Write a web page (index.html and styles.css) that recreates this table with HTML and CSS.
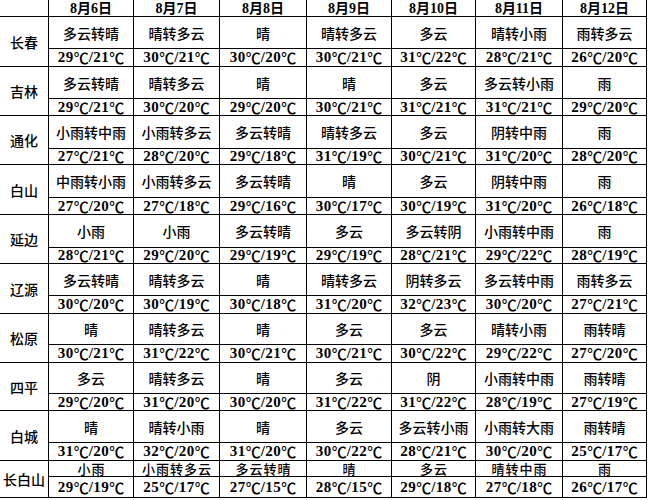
FILE: index.html
```html
<!DOCTYPE html>
<html lang="zh-CN">
<head>
<meta charset="utf-8">
<title>吉林省天气预报</title>
<link rel="stylesheet" href="styles.css">
</head>
<body>
<div class="wx">
  <div class="c hd"></div>
  <div class="c hd">8月6日</div>
  <div class="c hd">8月7日</div>
  <div class="c hd">8月8日</div>
  <div class="c hd">8月9日</div>
  <div class="c hd">8月10日</div>
  <div class="c hd">8月11日</div>
  <div class="c hd">8月12日</div>

  <div class="c city">长春</div>
  <div class="c w">多云转晴</div><div class="c w">晴转多云</div><div class="c w">晴</div><div class="c w">晴转多云</div><div class="c w">多云</div><div class="c w">晴转小雨</div><div class="c w">雨转多云</div>
  <div class="c t">29<span class="u">℃</span>/21<span class="u">℃</span></div><div class="c t">30<span class="u">℃</span>/21<span class="u">℃</span></div><div class="c t">30<span class="u">℃</span>/20<span class="u">℃</span></div><div class="c t">30<span class="u">℃</span>/21<span class="u">℃</span></div><div class="c t">31<span class="u">℃</span>/22<span class="u">℃</span></div><div class="c t">28<span class="u">℃</span>/21<span class="u">℃</span></div><div class="c t">26<span class="u">℃</span>/20<span class="u">℃</span></div>

  <div class="c city">吉林</div>
  <div class="c w">多云转晴</div><div class="c w">晴转多云</div><div class="c w">晴</div><div class="c w">晴</div><div class="c w">多云</div><div class="c w">多云转小雨</div><div class="c w">雨</div>
  <div class="c t">29<span class="u">℃</span>/21<span class="u">℃</span></div><div class="c t">30<span class="u">℃</span>/20<span class="u">℃</span></div><div class="c t">29<span class="u">℃</span>/20<span class="u">℃</span></div><div class="c t">30<span class="u">℃</span>/21<span class="u">℃</span></div><div class="c t">31<span class="u">℃</span>/21<span class="u">℃</span></div><div class="c t">31<span class="u">℃</span>/21<span class="u">℃</span></div><div class="c t">29<span class="u">℃</span>/20<span class="u">℃</span></div>

  <div class="c city">通化</div>
  <div class="c w">小雨转中雨</div><div class="c w">小雨转多云</div><div class="c w">多云转晴</div><div class="c w">晴转多云</div><div class="c w">多云</div><div class="c w">阴转中雨</div><div class="c w">雨</div>
  <div class="c t">27<span class="u">℃</span>/21<span class="u">℃</span></div><div class="c t">28<span class="u">℃</span>/20<span class="u">℃</span></div><div class="c t">29<span class="u">℃</span>/18<span class="u">℃</span></div><div class="c t">31<span class="u">℃</span>/19<span class="u">℃</span></div><div class="c t">30<span class="u">℃</span>/21<span class="u">℃</span></div><div class="c t">31<span class="u">℃</span>/20<span class="u">℃</span></div><div class="c t">28<span class="u">℃</span>/20<span class="u">℃</span></div>

  <div class="c city">白山</div>
  <div class="c w">中雨转小雨</div><div class="c w">小雨转多云</div><div class="c w">多云转晴</div><div class="c w">晴</div><div class="c w">多云</div><div class="c w">阴转中雨</div><div class="c w">雨</div>
  <div class="c t">27<span class="u">℃</span>/20<span class="u">℃</span></div><div class="c t">27<span class="u">℃</span>/18<span class="u">℃</span></div><div class="c t">29<span class="u">℃</span>/16<span class="u">℃</span></div><div class="c t">30<span class="u">℃</span>/17<span class="u">℃</span></div><div class="c t">30<span class="u">℃</span>/19<span class="u">℃</span></div><div class="c t">31<span class="u">℃</span>/20<span class="u">℃</span></div><div class="c t">26<span class="u">℃</span>/18<span class="u">℃</span></div>

  <div class="c city">延边</div>
  <div class="c w">小雨</div><div class="c w">小雨</div><div class="c w">多云转晴</div><div class="c w">多云</div><div class="c w">多云转阴</div><div class="c w">小雨转中雨</div><div class="c w">雨</div>
  <div class="c t">28<span class="u">℃</span>/21<span class="u">℃</span></div><div class="c t">29<span class="u">℃</span>/20<span class="u">℃</span></div><div class="c t">29<span class="u">℃</span>/19<span class="u">℃</span></div><div class="c t">29<span class="u">℃</span>/19<span class="u">℃</span></div><div class="c t">28<span class="u">℃</span>/21<span class="u">℃</span></div><div class="c t">29<span class="u">℃</span>/22<span class="u">℃</span></div><div class="c t">28<span class="u">℃</span>/19<span class="u">℃</span></div>

  <div class="c city">辽源</div>
  <div class="c w">多云转晴</div><div class="c w">晴转多云</div><div class="c w">晴</div><div class="c w">晴转多云</div><div class="c w">阴转多云</div><div class="c w">多云转中雨</div><div class="c w">雨转多云</div>
  <div class="c t">30<span class="u">℃</span>/20<span class="u">℃</span></div><div class="c t">30<span class="u">℃</span>/19<span class="u">℃</span></div><div class="c t">30<span class="u">℃</span>/18<span class="u">℃</span></div><div class="c t">31<span class="u">℃</span>/20<span class="u">℃</span></div><div class="c t">32<span class="u">℃</span>/23<span class="u">℃</span></div><div class="c t">30<span class="u">℃</span>/20<span class="u">℃</span></div><div class="c t">27<span class="u">℃</span>/21<span class="u">℃</span></div>

  <div class="c city">松原</div>
  <div class="c w">晴</div><div class="c w">晴转多云</div><div class="c w">晴</div><div class="c w">多云</div><div class="c w">多云</div><div class="c w">晴转小雨</div><div class="c w">雨转晴</div>
  <div class="c t">30<span class="u">℃</span>/21<span class="u">℃</span></div><div class="c t">31<span class="u">℃</span>/22<span class="u">℃</span></div><div class="c t">30<span class="u">℃</span>/21<span class="u">℃</span></div><div class="c t">30<span class="u">℃</span>/21<span class="u">℃</span></div><div class="c t">30<span class="u">℃</span>/22<span class="u">℃</span></div><div class="c t">29<span class="u">℃</span>/22<span class="u">℃</span></div><div class="c t">27<span class="u">℃</span>/20<span class="u">℃</span></div>

  <div class="c city">四平</div>
  <div class="c w">多云</div><div class="c w">晴转多云</div><div class="c w">晴</div><div class="c w">多云</div><div class="c w">阴</div><div class="c w">小雨转中雨</div><div class="c w">雨转晴</div>
  <div class="c t">29<span class="u">℃</span>/20<span class="u">℃</span></div><div class="c t">31<span class="u">℃</span>/20<span class="u">℃</span></div><div class="c t">30<span class="u">℃</span>/20<span class="u">℃</span></div><div class="c t">31<span class="u">℃</span>/22<span class="u">℃</span></div><div class="c t">31<span class="u">℃</span>/22<span class="u">℃</span></div><div class="c t">28<span class="u">℃</span>/19<span class="u">℃</span></div><div class="c t">27<span class="u">℃</span>/19<span class="u">℃</span></div>

  <div class="c city">白城</div>
  <div class="c w">晴</div><div class="c w">晴转小雨</div><div class="c w">晴</div><div class="c w">多云</div><div class="c w">多云转小雨</div><div class="c w">小雨转大雨</div><div class="c w">雨转晴</div>
  <div class="c t">31<span class="u">℃</span>/20<span class="u">℃</span></div><div class="c t">32<span class="u">℃</span>/20<span class="u">℃</span></div><div class="c t">31<span class="u">℃</span>/20<span class="u">℃</span></div><div class="c t">30<span class="u">℃</span>/22<span class="u">℃</span></div><div class="c t">28<span class="u">℃</span>/21<span class="u">℃</span></div><div class="c t">30<span class="u">℃</span>/20<span class="u">℃</span></div><div class="c t">25<span class="u">℃</span>/17<span class="u">℃</span></div>

  <div class="c city">长白山</div>
  <div class="c w">小雨</div><div class="c w">小雨转多云</div><div class="c w">多云转晴</div><div class="c w">晴</div><div class="c w">多云</div><div class="c w">晴转中雨</div><div class="c w">雨</div>
  <div class="c t">29<span class="u">℃</span>/19<span class="u">℃</span></div><div class="c t">25<span class="u">℃</span>/17<span class="u">℃</span></div><div class="c t">27<span class="u">℃</span>/15<span class="u">℃</span></div><div class="c t">28<span class="u">℃</span>/15<span class="u">℃</span></div><div class="c t">29<span class="u">℃</span>/18<span class="u">℃</span></div><div class="c t">27<span class="u">℃</span>/18<span class="u">℃</span></div><div class="c t">26<span class="u">℃</span>/17<span class="u">℃</span></div>
</div>
</body>
</html>
```
FILE: styles.css
```css
html, body {
  margin: 0;
  padding: 0;
  background: #fff;
}

.wx {
  display: grid;
  width: 647px;
  box-sizing: border-box;
  grid-template-columns: 48px 84px 85px 86px 84px 83px 86px 83px;
  grid-template-rows: 16px 31px 17px 31px 16px 32px 15px 32px 16px 32px 15px 31px 17px 30px 17px 30px 16px 31px 17px 15px 20px;
  gap: 1px;
  padding: 0 1px 1px 0;
  background: #000;
  color: #000;
}

.c {
  background: #fff;
  display: flex;
  align-items: center;
  justify-content: center;
  white-space: nowrap;
}

.hd {
  font-family: "Liberation Serif", "Noto Sans CJK SC", serif;
  font-size: 14px;
  font-weight: bold;
  line-height: 1;
  padding-top: 2px;
  box-sizing: border-box;
}

.city {
  grid-row: span 2;
  font-family: "Noto Sans CJK SC", sans-serif;
  font-size: 14px;
  font-weight: 500;
  line-height: 1;
}

.w {
  font-family: "Noto Sans CJK SC", sans-serif;
  font-size: 14px;
  font-weight: 500;
  line-height: 1;
}

.wx > .w:nth-last-child(-n+14) {
  font-size: 13px;
  letter-spacing: 1px;
  line-height: 13px;
  padding-left: 1px;
}

.t {
  font-family: "Liberation Serif", "Noto Sans CJK SC", serif;
  font-size: 15px;
  font-weight: bold;
  line-height: 1;
  letter-spacing: 0.5px;
}

.u {
  font-family: "Noto Sans CJK SC", sans-serif;
  font-weight: 500;
  font-size: 15px;
  letter-spacing: 0;
}
```
